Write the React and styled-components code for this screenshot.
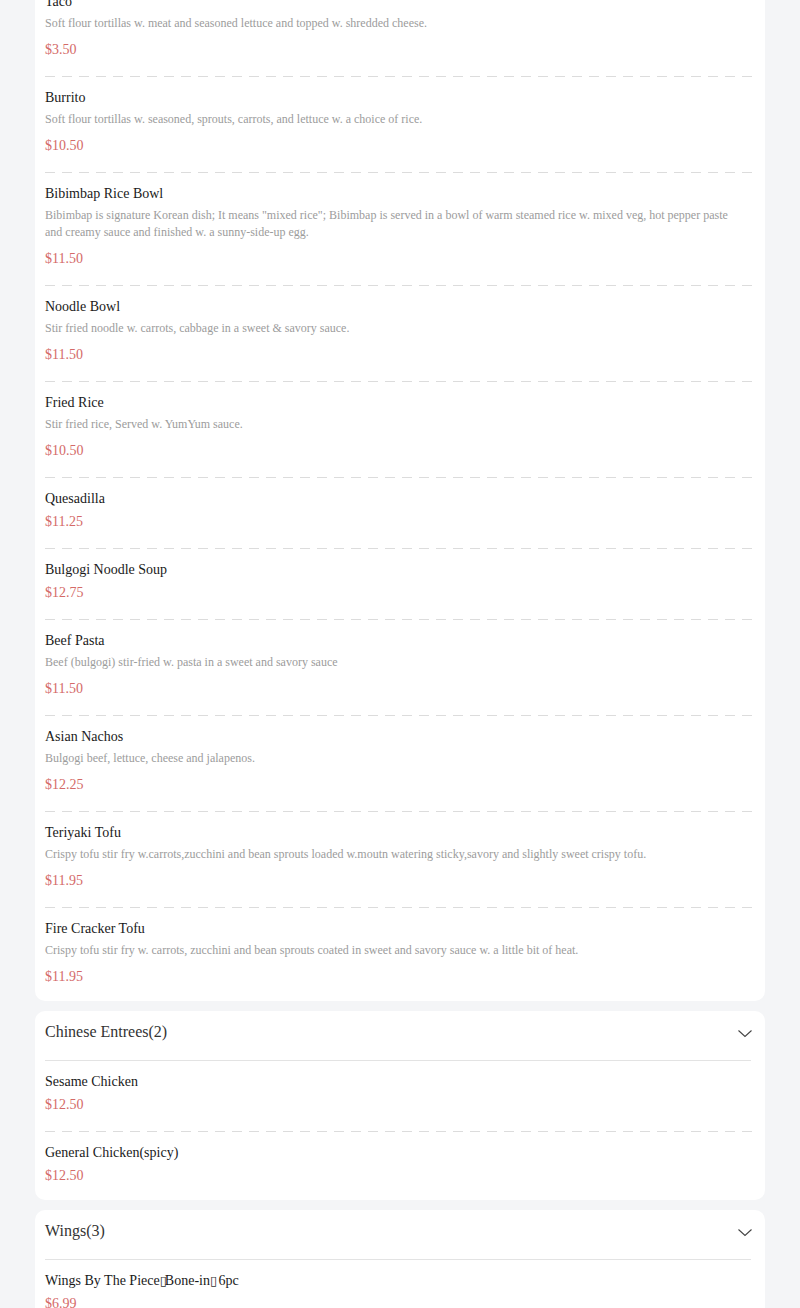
import React from "react";
import styled, { createGlobalStyle } from "styled-components";

const Global = createGlobalStyle`
  html, body { margin: 0; padding: 0; background: #f4f5f7; }
  body { font-family: "Liberation Serif", "Times New Roman", serif; }
`;

const Page = styled.div`
  display: flex;
  flex-direction: column;
  gap: 10px;
  padding: 0 35px 20px;
  margin-top: -19px;
`;

const Card = styled.section`
  background: #fff;
  border-radius: 10px;
  overflow: hidden;
`;

const Header = styled.div`
  display: flex;
  align-items: center;
  justify-content: space-between;
  margin: 0 14px 0 10px;
  padding: 11px 0 18px;
  border-bottom: 1px solid #e3e3e3;
`;

const HeaderTitle = styled.h2`
  margin: 0;
  font-size: 16px;
  line-height: 20px;
  font-weight: normal;
  color: #333;
`;

const Chevron = styled.svg`
  width: 16px;
  height: 16px;
  margin-top: 4px;
  margin-right: -2px;
  color: #444;
`;

const List = styled.ul`
  list-style: none;
  margin: 0;
  padding: 0 10px;
`;

const Item = styled.li`
  padding: 11px 0 17px;
  background-image: repeating-linear-gradient(
    to right,
    #dcdcdc 0,
    #dcdcdc 10px,
    transparent 10px,
    transparent 17px
  );
  background-size: 100% 1px;
  background-repeat: no-repeat;
  background-position: left bottom;
  &:last-child {
    background-image: none;
    padding-bottom: 14px;
  }
`;

const Name = styled.div`
  font-size: 14px;
  line-height: 20px;
  color: #1a1a1a;
`;

const Desc = styled.div`
  margin: 3px 20px 8px 0;
  font-size: 12px;
  line-height: 17px;
  color: #9c9c9c;
`;

const Price = styled.div`
  margin-top: 3px;
  font-size: 14px;
  line-height: 20px;
  color: #d46a68;
`;

const Missing = styled.span`
  font-family: "DejaVu Sans", sans-serif;
  font-size: 13px;
  line-height: 0;
  letter-spacing: -2px;
  color: #333;
`;

const MenuItem = ({ name, desc, price }) => (
  <Item>
    <Name>{name}</Name>
    {desc && <Desc>{desc}</Desc>}
    <Price>{price}</Price>
  </Item>
);

const ChevronDown = () => (
  <Chevron viewBox="0 0 16 16" fill="none">
    <path d="M1.5 4.5 L8 10.5 L14.5 4.5" stroke="currentColor" strokeWidth="1.1" />
  </Chevron>
);

const firstItems = [
  { name: "Taco", desc: "Soft flour tortillas w. meat and seasoned lettuce and topped w. shredded cheese.", price: "$3.50" },
  { name: "Burrito", desc: "Soft flour tortillas w. seasoned, sprouts, carrots, and lettuce w. a choice of rice.", price: "$10.50" },
  { name: "Bibimbap Rice Bowl", desc: 'Bibimbap is signature Korean dish; It means "mixed rice"; Bibimbap is served in a bowl of warm steamed rice w. mixed veg, hot pepper paste and creamy sauce and finished w. a sunny-side-up egg.', price: "$11.50" },
  { name: "Noodle Bowl", desc: "Stir fried noodle w. carrots, cabbage in a sweet & savory sauce.", price: "$11.50" },
  { name: "Fried Rice", desc: "Stir fried rice, Served w. YumYum sauce.", price: "$10.50" },
  { name: "Quesadilla", price: "$11.25" },
  { name: "Bulgogi Noodle Soup", price: "$12.75" },
  { name: "Beef Pasta", desc: "Beef (bulgogi) stir-fried w. pasta in a sweet and savory sauce", price: "$11.50" },
  { name: "Asian Nachos", desc: "Bulgogi beef, lettuce, cheese and jalapenos.", price: "$12.25" },
  { name: "Teriyaki Tofu", desc: "Crispy tofu stir fry w.carrots,zucchini and bean sprouts loaded w.moutn watering sticky,savory and slightly sweet crispy tofu.", price: "$11.95" },
  { name: "Fire Cracker Tofu", desc: "Crispy tofu stir fry w. carrots, zucchini and bean sprouts coated in sweet and savory sauce w. a little bit of heat.", price: "$11.95" },
];

const wingName = (pcs) => (
  <>
    Wings By The Piece<Missing>{"\u25AF"}</Missing>Bone-in<Missing>{"\u25AF"}</Missing> {pcs}
  </>
);

const sections = [
  {
    title: "Chinese Entrees(2)",
    items: [
      { key: "sesame", name: "Sesame Chicken", price: "$12.50" },
      { key: "general", name: "General Chicken(spicy)", price: "$12.50" },
    ],
  },
  {
    title: "Wings(3)",
    items: [
      { key: "w6", name: wingName("6pc"), price: "$6.99" },
      { key: "w12", name: wingName("12pc"), price: "$12.99" },
    ],
  },
];

export default function App() {
  return (
    <>
      <Global />
      <Page>
        <Card>
          <List>
            {firstItems.map((it) => (
              <MenuItem key={it.name} {...it} />
            ))}
          </List>
        </Card>
        {sections.map((s) => (
          <Card key={s.title}>
            <Header>
              <HeaderTitle>{s.title}</HeaderTitle>
              <ChevronDown />
            </Header>
            <List>
              {s.items.map((it) => (
                <MenuItem key={it.key} name={it.name} price={it.price} />
              ))}
            </List>
          </Card>
        ))}
      </Page>
    </>
  );
}
